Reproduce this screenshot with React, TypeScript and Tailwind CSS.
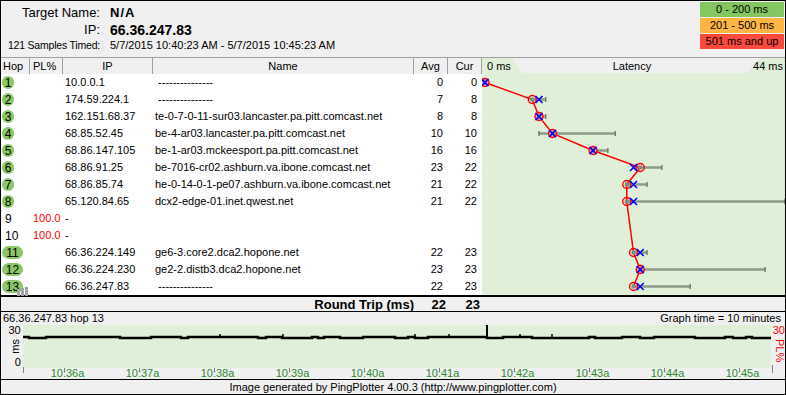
import React from 'react';
import clsx from 'clsx';

type Hop = {
  n: number;
  pl?: string;
  ip: string;
  name: string;
  avg?: number;
  cur?: number;
  min?: number;
  max?: number;
};

const hops: Hop[] = [
  { n: 1, ip: '10.0.0.1', name: ' ---------------', avg: 0, cur: 0, min: 0, max: 0 },
  { n: 2, ip: '174.59.224.1', name: ' ---------------', avg: 7, cur: 8, min: 7, max: 9 },
  { n: 3, ip: '162.151.68.37', name: 'te-0-7-0-11-sur03.lancaster.pa.pitt.comcast.net', avg: 8, cur: 8, min: 8, max: 9 },
  { n: 4, ip: '68.85.52.45', name: 'be-4-ar03.lancaster.pa.pitt.comcast.net', avg: 10, cur: 10, min: 8, max: 19.3 },
  { n: 5, ip: '68.86.147.105', name: 'be-1-ar03.mckeesport.pa.pitt.comcast.net', avg: 16, cur: 16, min: 16, max: 18.2 },
  { n: 6, ip: '68.86.91.25', name: 'be-7016-cr02.ashburn.va.ibone.comcast.net', avg: 23, cur: 22, min: 22, max: 26.2 },
  { n: 7, ip: '68.86.85.74', name: 'he-0-14-0-1-pe07.ashburn.va.ibone.comcast.net', avg: 21, cur: 22, min: 21, max: 24 },
  { n: 8, ip: '65.120.84.65', name: 'dcx2-edge-01.inet.qwest.net', avg: 21, cur: 22, min: 21, max: 44.4 },
  { n: 9, pl: '100.0', ip: '-', name: '' },
  { n: 10, pl: '100.0', ip: '-', name: '' },
  { n: 11, ip: '66.36.224.149', name: 'ge6-3.core2.dca2.hopone.net', avg: 22, cur: 23, min: 22, max: 24 },
  { n: 12, ip: '66.36.224.230', name: 'ge2-2.distb3.dca2.hopone.net', avg: 23, cur: 23, min: 23, max: 41.5 },
  { n: 13, ip: '66.36.247.83', name: ' ---------------', avg: 22, cur: 23, min: 22, max: 30.4 },
];

const times = ['10:36a', '10:37a', '10:38a', '10:39a', '10:40a', '10:41a', '10:42a', '10:43a', '10:44a', '10:45a'];

// latency scale: 0 ms sits 3px into the panel, 6.75px per ms
const lx = (ms: number) => 3 + ms * 6.75;
const ry = (i: number) => 8.5 + i * 17;

// round trip history line for the bottom graph
const plotPath = (() => {
  let s = 17;
  const rnd = () => {
    s = (s * 16807) % 2147483647;
    return s / 2147483647;
  };
  let d = 'M0 12';
  let x = 0;
  while (x < 748) {
    const nx = Math.min(748, x + 6 + Math.floor(rnd() * 14));
    const ny = rnd() < 0.4 ? 13 : 12;
    d += ` H${nx} V${ny}`;
    x = nx;
  }
  return d;
})();

const bumps = [197, 260, 392, 426, 497, 529];

const LatencyChart: React.FC = () => {
  const pts = hops.map((h, i) => ({ ...h, i })).filter(h => h.avg !== undefined);
  const line = pts.map(p => `${lx(p.avg!)},${ry(p.i)}`).join(' ');
  return (
    <svg width="303" height="221" className="block">
      {pts.map(p =>
        p.max! > p.min! ? (
          <g key={'b' + p.n}>
            <line x1={lx(p.min!)} y1={ry(p.i)} x2={lx(p.max!)} y2={ry(p.i)} stroke="#8d9b89" strokeWidth="2.5" />
            <line x1={lx(p.max!)} y1={ry(p.i) - 2.5} x2={lx(p.max!)} y2={ry(p.i) + 2.5} stroke="#6f7d6b" strokeWidth="1.5" />
            {p.min! < Math.min(p.avg!, p.cur!) && (
              <line x1={lx(p.min!)} y1={ry(p.i) - 2.5} x2={lx(p.min!)} y2={ry(p.i) + 2.5} stroke="#6f7d6b" strokeWidth="1.5" />
            )}
          </g>
        ) : null
      )}
      <polyline points={line} fill="none" stroke="#ff0000" strokeWidth="1.5" />
      {pts.map(p => {
        const cx = lx(p.avg!);
        const y = ry(p.i);
        const xx = lx(p.cur!);
        const same = p.avg === p.cur;
        return (
          <g key={'m' + p.n}>
            {same && <rect x={cx - 4} y={y - 4} width="8" height="8" fill="#e9a0a8" />}
            <rect x={cx - 2} y={y - 2} width="4" height="4" fill="#7f8c7b" />
            <circle cx={cx} cy={y} r="4" fill="none" stroke="#ff0000" strokeWidth="1.4" />
            <path
              d={`M${xx - 3.5} ${y - 3.5} L${xx + 3.5} ${y + 3.5} M${xx + 3.5} ${y - 3.5} L${xx - 3.5} ${y + 3.5}`}
              stroke="#0000ff"
              strokeWidth="1.6"
            />
          </g>
        );
      })}
    </svg>
  );
};

const HopBadge: React.FC<{ n: number; ok: boolean }> = ({ n, ok }) =>
  ok ? (
    <span
      className={clsx(
        'inline-flex items-center justify-center h-[13px] rounded-full bg-[#8bc766] text-[12px] leading-none',
        n >= 10 ? 'w-[21px]' : 'w-[12px]'
      )}
    >
      {n}
    </span>
  ) : (
    <span className="pl-[3px] text-[12px]">{n}</span>
  );

export default function App() {
  return (
    <div className="w-[786px] h-[395px] border border-black bg-[#f0f0f0] flex flex-col overflow-hidden text-black text-[11px] leading-none font-['Liberation_Sans',Arial,sans-serif]">
      {/* header */}
      <div className="h-[56px] flex shrink-0">
        <div className="pt-[3px] flex flex-col">
          <div className="h-[17px] flex items-center">
            <span className="w-[99px] text-right text-[13px]">Target Name:</span>
            <span className="ml-[10px] text-[13px] font-bold tracking-[1px]">N/A</span>
          </div>
          <div className="h-[17px] flex items-center">
            <span className="w-[99px] text-right text-[13px]">IP:</span>
            <span className="ml-[10px] text-[14px] font-bold">66.36.247.83</span>
          </div>
          <div className="h-[15px] flex items-center">
            <div className="w-[99px] flex justify-end">
              <span className="whitespace-nowrap text-[10.5px] tracking-[-0.2px]">121 Samples Timed:</span>
            </div>
            <span className="ml-[10px] whitespace-nowrap">5/7/2015 10:40:23 AM - 5/7/2015 10:45:23 AM</span>
          </div>
        </div>
        <div className="ml-auto mr-[1px] mt-[1px] w-[84px] flex flex-col gap-[1px]">
          <div className="h-[15px] bg-[#84c661] flex items-center justify-center">0 - 200 ms</div>
          <div className="h-[15px] bg-[#ffb443] flex items-center justify-center">201 - 500 ms</div>
          <div className="h-[15px] bg-[#fb4a3b] flex items-center justify-center">501 ms and up</div>
        </div>
      </div>

      {/* trace table */}
      <div className="flex h-[238px] shrink-0">
        <div className="w-[481px] flex flex-col">
          <div className="h-[17px] border-t border-[#a0a0a0] flex">
            <div className="w-[29px] border-r border-[#a0a0a0] flex items-center pl-[2px]">Hop</div>
            <div className="w-[33px] border-r border-[#a0a0a0] flex items-center pl-[3px]">PL%</div>
            <div className="w-[90px] border-r border-[#a0a0a0] flex items-center justify-center">IP</div>
            <div className="w-[261px] border-r border-[#a0a0a0] flex items-center justify-center">Name</div>
            <div className="w-[34px] border-r border-[#a0a0a0] flex items-center justify-center">Avg</div>
            <div className="w-[34px] border-r border-[#a0a0a0] flex items-center justify-center">Cur</div>
          </div>
          <div className="flex-1 bg-white">
            {hops.map(h => (
              <div key={h.n} className="h-[17px] flex items-center">
                <div className="w-[29px] relative flex items-center pl-[1px]">
                  <HopBadge n={h.n} ok={!h.pl} />
                  {h.n === 13 && (
                    <svg width="11" height="9" className="absolute left-[16px] top-[7px]">
                      <rect x="0" y="2" width="3" height="7" fill="#a4a4a4" />
                      <rect x="4" y="1" width="3" height="8" fill="#a4a4a4" />
                      <rect x="8" y="0" width="3" height="9" fill="#a4a4a4" />
                    </svg>
                  )}
                </div>
                <div className="w-[33px] pl-[3px] text-[#ff0000]">{h.pl}</div>
                <div className="w-[90px] pl-[2px]">{h.ip}</div>
                <div className="w-[261px] pl-[2px] whitespace-pre">{h.name}</div>
                <div className="w-[34px] text-right pr-[5px]">{h.avg}</div>
                <div className="w-[34px] text-right pr-[5px]">{h.cur}</div>
              </div>
            ))}
          </div>
        </div>

        <div className="flex-1 flex flex-col bg-[#e0f0d8]">
          <div className="h-[17px] border-t border-[#a0a0a0] relative flex items-center justify-between pl-[5px] pr-[2px]">
            <div className="absolute left-0 right-0 top-0 h-[15px] bg-[#f0f0f0] [clip-path:polygon(30px_0,278px_0,265px_100%,41px_100%)]" />
            <span className="relative">0 ms</span>
            <span className="relative">Latency</span>
            <span className="relative">44 ms</span>
          </div>
          <LatencyChart />
        </div>
      </div>

      {/* round trip totals */}
      <div className="h-[16px] shrink-0 border-t-2 border-black flex items-center font-bold text-[13px]">
        <div className="w-[413px] text-right">Round Trip (ms)</div>
        <div className="w-[34px] text-right pr-[2px]">22</div>
        <div className="w-[34px] text-right pr-[2px]">23</div>
      </div>

      {/* history graph */}
      <div className="h-[68px] shrink-0 border-t border-black flex flex-col">
        <div className="h-[13px] flex items-center justify-between pl-[2px] pr-[4px]">
          <span>66.36.247.83 hop 13</span>
          <span>Graph time = 10 minutes</span>
        </div>
        <div className="h-[43px] flex">
          <div className="w-[22px] flex flex-col items-end justify-between pr-[2px] leading-[11px]">
            <span>30</span>
            <span className="[writing-mode:vertical-rl] rotate-180">ms</span>
            <span>0</span>
          </div>
          <div className="w-[748px] bg-[#e0f0d8]">
            <svg width="748" height="43" className="block overflow-visible">
              <path d={plotPath} fill="none" stroke="#000" strokeWidth="2.5" />
              {bumps.map(b => (
                <line key={b} x1={b} y1="12" x2={b} y2="9" stroke="#000" strokeWidth="1.5" />
              ))}
              <line x1="464" y1="12" x2="464" y2="0" stroke="#000" strokeWidth="2" />
              <line x1="0.5" y1="42" x2="0.5" y2="48" stroke="#808080" />
              <line x1="749.5" y1="40" x2="749.5" y2="48" stroke="#808080" />
              {times.map((t, k) => (
                <line key={t} x1={41.5 + k * 75} y1="43" x2={41.5 + k * 75} y2="47" stroke="#808080" />
              ))}
            </svg>
          </div>
          <div className="flex-1 flex flex-col pl-[2px] text-[#ff0000] leading-[11px]">
            <span>30</span>
            <span className="mt-[3px] [writing-mode:vertical-rl]">PL%</span>
          </div>
        </div>
        <div className="h-[11px] flex pl-[29px] text-[#2a8a2a] leading-[11px]">
          {times.map(t => (
            <div key={t} className="w-[75px] text-center">
              {t}
            </div>
          ))}
        </div>
      </div>

      {/* footer */}
      <div className="h-[15px] shrink-0 border-t border-black flex items-center justify-center">
        Image generated by PingPlotter 4.00.3 (http://www.pingplotter.com)
      </div>
    </div>
  );
}
